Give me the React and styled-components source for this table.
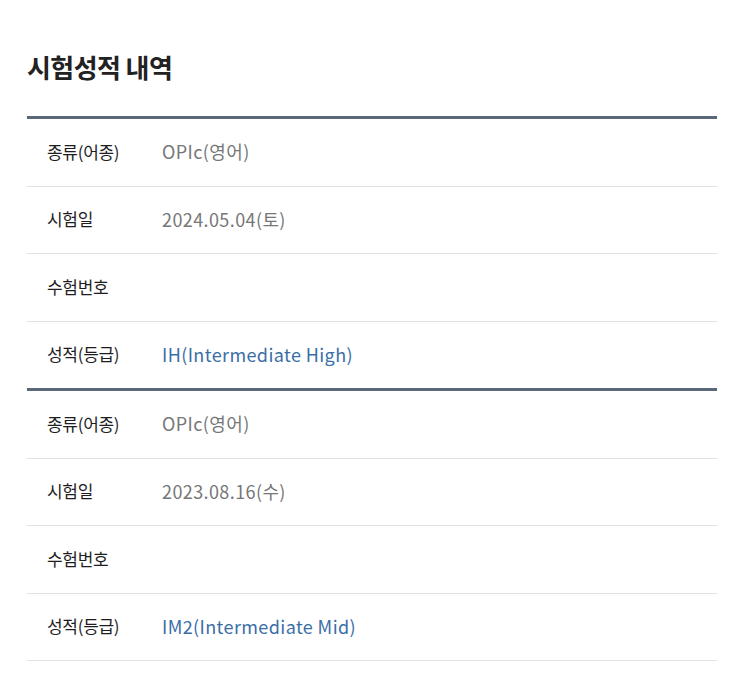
import React from "react";
import styled, { createGlobalStyle } from "styled-components";

const Global = createGlobalStyle`
  html, body { margin: 0; padding: 0; background: #fff; }
  body { font-family: "Noto Sans CJK KR", "Noto Sans", sans-serif; }
`;

const Page = styled.div`
  padding: 47px 26px 0 27px;
`;

const Title = styled.h2`
  margin: 0 0 29px;
  font-size: 26px;
  font-weight: 700;
  color: #222;
  letter-spacing: -0.6px;
  line-height: 40px;
`;

const Table = styled.div`
  border-top: 3px solid #5a6879;
  display: flex;
  flex-direction: column;
  ${(p) => (p.$last ? "" : "& > div:last-child { border-bottom: none; }")}
`;

const Row = styled.div`
  display: grid;
  grid-template-columns: 115px 1fr;
  align-items: center;
  height: 64.5px;
  border-bottom: 1px solid #e2e2e2;
  padding-left: 20px;
  padding-bottom: 2px;
`;

const Label = styled.span`
  color: #1e1e1e;
  font-size: 17px;
  font-weight: 400;
  letter-spacing: -0.3px;
`;

const Value = styled.span`
  color: ${(p) => (p.$accent ? "#3a6ea6" : "#777")};
  font-size: 18px;
  letter-spacing: 0.4px;
`;

const data = [
  { kind: "OPIc(영어)", date: "2024.05.04(토)", grade: "IH(Intermediate High)" },
  { kind: "OPIc(영어)", date: "2023.08.16(수)", grade: "IM2(Intermediate Mid)" },
];

export default function App() {
  return (
    <Page>
      <Global />
      <Title>시험성적 내역</Title>
      {data.map((d, i) => (
        <Table key={i} $last={i === data.length - 1}>
          <Row>
            <Label>종류(어종)</Label>
            <Value>{d.kind}</Value>
          </Row>
          <Row>
            <Label>시험일</Label>
            <Value>{d.date}</Value>
          </Row>
          <Row>
            <Label>수험번호</Label>
            <Value></Value>
          </Row>
          <Row>
            <Label>성적(등급)</Label>
            <Value $accent>{d.grade}</Value>
          </Row>
        </Table>
      ))}
    </Page>
  );
}
